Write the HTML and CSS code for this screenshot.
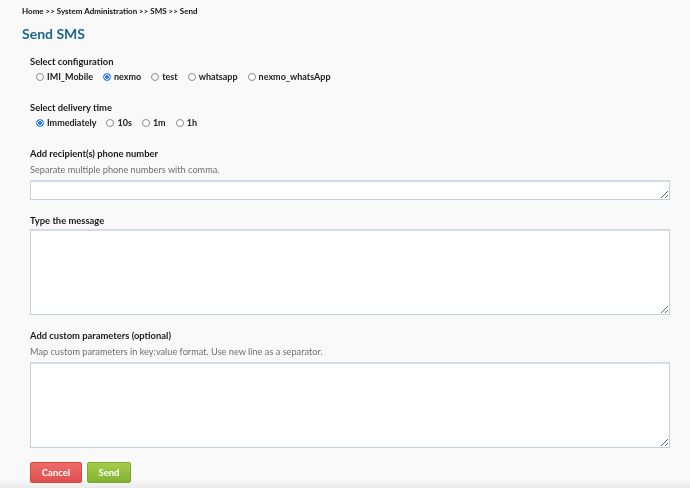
FILE: index.html
```html
<!DOCTYPE html>
<html>
<head>
<meta charset="utf-8">
<link rel="stylesheet" href="styles.css">
</head>
<body>
<div class="page">
  <div class="breadcrumb">Home &gt;&gt; System Administration &gt;&gt; SMS &gt;&gt; Send</div>
  <h1 class="title">Send SMS</h1>
  <form class="form">
    <div class="field field-radio">
      <div class="label">Select configuration</div>
      <div class="radios">
        <label class="opt"><input type="radio" name="cfg"><span>IMI_Mobile</span></label>
        <label class="opt"><input type="radio" name="cfg" checked><span>nexmo</span></label>
        <label class="opt"><input type="radio" name="cfg"><span>test</span></label>
        <label class="opt"><input type="radio" name="cfg"><span>whatsapp</span></label>
        <label class="opt"><input type="radio" name="cfg"><span>nexmo_whatsApp</span></label>
      </div>
    </div>
    <div class="field field-radio">
      <div class="label">Select delivery time</div>
      <div class="radios">
        <label class="opt"><input type="radio" name="time" checked><span>Immediately</span></label>
        <label class="opt"><input type="radio" name="time"><span>10s</span></label>
        <label class="opt"><input type="radio" name="time"><span>1m</span></label>
        <label class="opt"><input type="radio" name="time"><span>1h</span></label>
      </div>
    </div>
    <div class="field">
      <div class="label">Add recipient(s) phone number</div>
      <div class="help">Separate multiple phone numbers with comma.</div>
      <textarea class="box box-small"></textarea>
    </div>
    <div class="field">
      <div class="label">Type the message</div>
      <textarea class="box box-large box-msg"></textarea>
    </div>
    <div class="field">
      <div class="label">Add custom parameters (optional)</div>
      <div class="help">Map custom parameters in key:value format. Use new line as a separator.</div>
      <textarea class="box box-large"></textarea>
    </div>
    <div class="actions">
      <button type="button" class="btn btn-cancel">Cancel</button>
      <button type="button" class="btn btn-send">Send</button>
    </div>
  </form>
</div>
<div class="bottom-shade"></div>
</body>
</html>
```
FILE: styles.css
```css
html, body {
  margin: 0;
  padding: 0;
  background: #f9f9f9;
}
body {
  font-family: Lato, "Open Sans", sans-serif;
  color: #1d1d1d;
}
.page {
  padding: 4px 20px 0 22px;
}
.breadcrumb {
  font-size: 8px;
  font-weight: 700;
  line-height: 14px;
  color: #111;
}
.title {
  margin: 6px 0 0 0;
  font-size: 14px;
  line-height: 20px;
  font-weight: 700;
  color: #1c6590;
}
.form {
  margin-top: 11px;
  padding-left: 8px;
}
.field {
  margin-bottom: 14px;
}
.field-radio {
  margin-bottom: 17px;
}
.label {
  font-size: 9.4px;
  font-weight: 700;
  line-height: 14px;
  color: #1a1a1a;
}
.help {
  font-size: 9.2px;
  line-height: 14px;
  color: #707070;
  margin-top: 2px;
}
.radios {
  display: flex;
  gap: 10px;
  padding-left: 6px;
  margin-top: 1px;
  line-height: 14px;
  font-size: 9px;
  font-weight: 700;
  color: #222;
}
.opt {
  display: flex;
  align-items: center;
  gap: 3px;
}
.opt input {
  appearance: none;
  -webkit-appearance: none;
  margin: 0;
  width: 8px;
  height: 8px;
  border: 1px solid #8a8a8a;
  border-radius: 50%;
  background: #fff;
  box-sizing: border-box;
}
.opt input:checked {
  border-color: #2f7cf6;
  background: radial-gradient(circle, #2f7cf6 0 1.6px, #fff 2px 2.6px, #2f7cf6 3px);
}
.box {
  display: block;
  box-sizing: border-box;
  width: 640px;
  margin: 3px 0 0 0;
  border: 1px solid #c7d1de;
  border-top: 2px solid #d3dbe6;
  background: #fff;
  font-family: inherit;
  padding: 2px 4px;
}
.box-small {
  height: 20px;
}
.box-large {
  height: 86px;
}
.box-msg {
  margin-top: 1px;
}
.actions {
  display: flex;
  gap: 5px;
  margin-top: 14px;
}
.btn {
  height: 21px;
  border-radius: 2px;
  font-family: inherit;
  font-size: 9.5px;
  font-weight: 700;
  color: #fff;
  padding: 0;
  cursor: pointer;
}
.btn-cancel {
  width: 52px;
  background: linear-gradient(#ef6b6b, #e05050);
  border: 1px solid #d94848;
}
.btn-send {
  width: 44px;
  background: linear-gradient(#a3cc4a, #85b232);
  border: 1px solid #7fa92f;
}
.bottom-shade {
  position: fixed;
  left: 0;
  right: 0;
  bottom: 0;
  height: 8px;
  background: linear-gradient(rgba(0,0,0,0), rgba(0,0,0,0.06));
  pointer-events: none;
}
```
